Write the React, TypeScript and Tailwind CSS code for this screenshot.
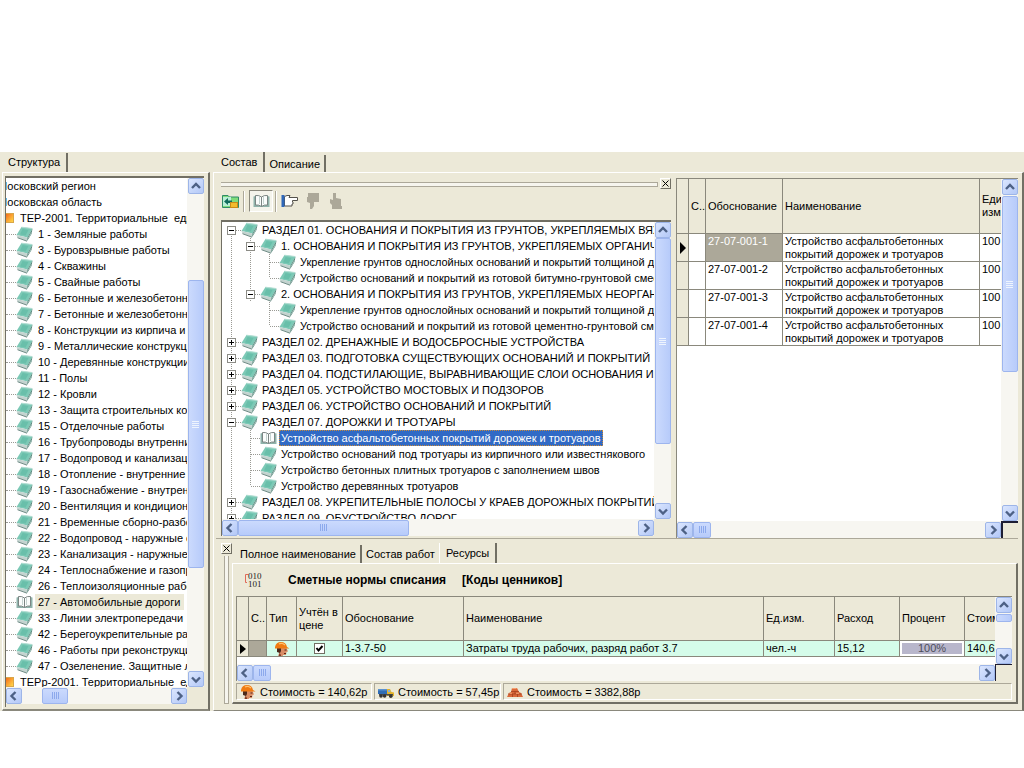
import React from "react";

type Cell = "v" | "t" | "l" | "+" | "-" | "+f" | " ";

function Book() {
  return (
    <svg width="17" height="16" viewBox="0 0 17 16" className="block shrink-0" aria-hidden="true">
      <path d="M5.5 1 L16.5 2.5 L11.5 11.5 L0.5 9 Z" fill="#7cc9b6" />
      <path d="M6.5 3 L12.5 4 L9.5 9.5 L4 8.5 Z" fill="#69bfaa" />
      <path d="M5.5 1.2 L16 2.5" stroke="#b3ded3" fill="none" />
      <path d="M0.5 9 L11.5 11.5 L11 15 L1.5 11.5 Z" fill="#c3d3cf" />
      <path d="M1.5 11.7 L11 15.2" stroke="#6d8983" fill="none" />
      <path d="M11.5 11.5 L16.5 2.5 L15.5 8 L11 15.3 Z" fill="#55857a" />
      <path d="M12.5 12 L15.5 6.5" stroke="#a8c6bf" fill="none" />
    </svg>
  );
}

function OpenBook() {
  return (
    <svg width="17" height="16" viewBox="0 0 17 16" className="block shrink-0" aria-hidden="true">
      <path d="M0.5 3.5 L2.5 3 L2.5 12 L14.5 12 L14.5 3 L16.5 3.5 L16.5 14 L0.5 14 Z" fill="#8fb3ab" />
      <path d="M2.5 2.5 Q6 2 8.5 4 Q11 2 14.5 2.5 L14.5 12 Q11 11.5 8.5 13.5 Q6 11.5 2.5 12 Z" fill="#fbfdfc" stroke="#7b8583" />
      <path d="M8.5 4 V13.5" stroke="#7b8583" />
      <path d="M6.5 4 V11 M10.5 4 V11" stroke="#c5d3d0" />
    </svg>
  );
}

function Helmet() {
  return (
    <svg width="16" height="16" viewBox="0 0 16 16" className="block shrink-0" aria-hidden="true">
      <path d="M4 7 L12.5 7 L14 10.5 L12.5 11 L12 14 L9 14 L8.5 16 L4 16 L5 12 Z" fill="#d98d66" />
      <path d="M3 7 L7 7 L7 10 L6 12 L3 11 Z" fill="#4a2a1c" />
      <path d="M1 6 Q2 1 7 1 Q12 1 13 6 L15.5 7.5 L9 7.5 L1 7.5 Z" fill="#f07b12" />
      <path d="M5 3 Q8 1.5 11 4" stroke="#ffc170" strokeWidth="1.3" fill="none" />
      <path d="M10.5 9 H12.5 M10 12.5 H12" stroke="#5a2516" />
      <path d="M4.5 16 L5.5 12 L7 14 L7 16 Z" fill="#7a3b28" />
    </svg>
  );
}

function Truck() {
  return (
    <svg width="16" height="16" viewBox="0 0 16 16" className="block shrink-0" aria-hidden="true">
      <rect x="0" y="6" width="9" height="4" fill="#2f6cb5" />
      <rect x="0" y="5" width="9" height="1.5" fill="#5c93cf" />
      <path d="M9 10 V5 H12 L13.5 8 L16 8.5 V12 H9 Z" fill="#e3b32b" />
      <path d="M10 8 V6 H11.8 L12.6 8 Z" fill="#7fb0dd" />
      <rect x="1" y="10" width="14" height="1.5" fill="#4b4b4b" />
      <circle cx="3" cy="12" r="1.8" fill="#333" />
      <circle cx="6.6" cy="12" r="1.8" fill="#333" />
      <circle cx="12.8" cy="12.2" r="1.8" fill="#333" />
    </svg>
  );
}

function Bricks() {
  return (
    <svg width="16" height="16" viewBox="0 0 16 16" className="block shrink-0" aria-hidden="true">
      <path d="M5 4 L10 4 L12 8 L14 9 L16 13 L0 13 L2 9 L4 8 Z" fill="#d9683a" />
      <path d="M1 10 H15 M4 7.5 H12 M5.5 10 V13 M10.5 10 V13 M8 7.5 V10" stroke="#a33f1e" strokeWidth="0.8" />
      <path d="M5 4.5 H9.5 M2.5 9.3 H5 M9 9.3 H12" stroke="#f3a070" />
    </svg>
  );
}

function TreeCell({ kind }: { kind: Cell }) {
  const line = { stroke: "#9a9a94", strokeDasharray: "1 1" };
  const box = kind === "+" || kind === "-" || kind === "+f";
  const svg = (
    <svg width="19" height="16" viewBox="0 0 19 16" className="block" aria-hidden="true">
      {(kind === "v" || kind === "t" || kind === "+") && <path d="M9.5 0 V16" {...line} />}
      {kind === "l" && <path d="M9.5 0 V8" {...line} />}
      {(kind === "-" || kind === "+f") && <path d={kind === "-" ? "M9.5 0 V16" : "M9.5 8 V16"} {...line} />}
      {kind !== "v" && kind !== " " && <path d="M10 8.5 H19" {...line} />}
      {box && <rect x="5.5" y="4.5" width="8" height="8" fill="#fff" stroke="#8c8c86" />}
      {box && <path d="M7 8.5 H12" stroke="#000" />}
      {kind === "+" && <path d="M9.5 6 V11" stroke="#000" />}
    </svg>
  );
  return box ? (
    <button type="button" aria-label={kind === "+" ? "Развернуть" : "Свернуть"} className="block shrink-0">
      {svg}
    </button>
  ) : (
    <span className="block shrink-0">{svg}</span>
  );
}

const arrows = {
  up: "M4 10 L8 6 L12 10",
  down: "M4 6.5 L8 10.5 L12 6.5",
  left: "M9.5 4 L5.5 8 L9.5 12",
  right: "M6.5 4 L10.5 8 L6.5 12",
};
const arrowNames = { up: "Вверх", down: "Вниз", left: "Влево", right: "Вправо" };

function Arrow({ dir }: { dir: keyof typeof arrows }) {
  return (
    <button
      type="button"
      aria-label={arrowNames[dir]}
      className="block size-4 shrink-0 rounded-xs border border-[#9db5e8] bg-linear-to-br from-[#dbe6fe] to-[#b3c8f7]"
    >
      <svg viewBox="1 1 14 14" className="block size-3.5">
        <path d={arrows[dir]} fill="none" stroke="#4d6185" strokeWidth="2.4" />
      </svg>
    </button>
  );
}

function VScroll({ thumb, grip = true }: { thumb: string; grip?: boolean }) {
  return (
    <div className="flex w-[17px] shrink-0 flex-col items-center bg-[#f7f6f1]">
      <Arrow dir="up" />
      <div className="flex min-h-0 w-4 flex-1 flex-col">
        <div className={`flex flex-col items-center justify-center gap-px rounded-xs border border-[#9db5ee] bg-linear-to-r from-[#cbdafd] to-[#b7cbfa] ${thumb}`}>
          {grip && [0, 1, 2, 3].map((i) => <span key={i} className="h-px w-[7px] bg-[#eef4fe]" />)}
        </div>
      </div>
      <Arrow dir="down" />
    </div>
  );
}

function HScroll({ thumb }: { thumb: string }) {
  return (
    <div className="flex h-[17px] min-w-0 flex-1 items-center bg-[#f7f6f1]">
      <Arrow dir="left" />
      <div className="flex h-4 min-w-0 flex-1">
        <div className={`flex items-center justify-center gap-px rounded-xs border border-[#9db5ee] bg-linear-to-b from-[#cbdafd] to-[#b7cbfa] ${thumb}`}>
          {[0, 1, 2, 3].map((i) => (
            <span key={i} className="h-[7px] w-px bg-[#8ca9ec]" />
          ))}
        </div>
      </div>
      <Arrow dir="right" />
    </div>
  );
}

const chapters = [
  "1 - Земляные работы",
  "3 - Буровзрывные работы",
  "4 - Скважины",
  "5 - Свайные работы",
  "6 - Бетонные и железобетонные",
  "7 - Бетонные и железобетонные",
  "8 - Конструкции из кирпича и блоков",
  "9 - Металлические конструкции",
  "10 - Деревянные конструкции",
  "11 - Полы",
  "12 - Кровли",
  "13 - Защита строительных конструкций",
  "15 - Отделочные работы",
  "16 - Трубопроводы внутренние",
  "17 - Водопровод и канализация",
  "18 - Отопление - внутренние устройства",
  "19 - Газоснабжение - внутренние",
  "20 - Вентиляция и кондиционирование",
  "21 - Временные сборно-разборные",
  "22 - Водопровод - наружные сети",
  "23 - Канализация - наружные сети",
  "24 - Теплоснабжение и газопроводы",
  "26 - Теплоизоляционные работы",
  "27 - Автомобильные дороги",
  "33 - Линии электропередачи",
  "42 - Берегоукрепительные работы",
  "46 - Работы при реконструкции",
  "47 - Озеленение. Защитные лесные",
];

const sections: { cells: Cell[]; text: string; selected?: boolean }[] = [
  { cells: ["+f"], text: "РАЗДЕЛ 01. ОСНОВАНИЯ И ПОКРЫТИЯ ИЗ ГРУНТОВ, УКРЕПЛЯЕМЫХ ВЯЖУЩИМИ" },
  { cells: ["v", "-"], text: "1. ОСНОВАНИЯ И ПОКРЫТИЯ ИЗ ГРУНТОВ, УКРЕПЛЯЕМЫХ ОРГАНИЧЕСКИМИ" },
  { cells: ["v", "v", "t"], text: "Укрепление грунтов однослойных оснований и покрытий толщиной до" },
  { cells: ["v", "v", "l"], text: "Устройство оснований и покрытий из готовой битумно-грунтовой смеси" },
  { cells: ["v", "-"], text: "2. ОСНОВАНИЯ И ПОКРЫТИЯ ИЗ ГРУНТОВ, УКРЕПЛЯЕМЫХ НЕОРГАНИЧЕСКИМИ" },
  { cells: ["v", " ", "t"], text: "Укрепление грунтов однослойных оснований и покрытий толщиной до" },
  { cells: ["v", " ", "l"], text: "Устройство оснований и покрытий из готовой цементно-грунтовой смеси" },
  { cells: ["+"], text: "РАЗДЕЛ 02. ДРЕНАЖНЫЕ И ВОДОСБРОСНЫЕ УСТРОЙСТВА" },
  { cells: ["+"], text: "РАЗДЕЛ 03. ПОДГОТОВКА СУЩЕСТВУЮЩИХ ОСНОВАНИЙ И ПОКРЫТИЙ" },
  { cells: ["+"], text: "РАЗДЕЛ 04. ПОДСТИЛАЮЩИЕ, ВЫРАВНИВАЮЩИЕ СЛОИ ОСНОВАНИЯ И" },
  { cells: ["+"], text: "РАЗДЕЛ 05. УСТРОЙСТВО МОСТОВЫХ И ПОДЗОРОВ" },
  { cells: ["+"], text: "РАЗДЕЛ 06. УСТРОЙСТВО ОСНОВАНИЙ И ПОКРЫТИЙ" },
  { cells: ["-"], text: "РАЗДЕЛ 07. ДОРОЖКИ И ТРОТУАРЫ" },
  { cells: ["v", "t"], text: "Устройство асфальтобетонных покрытий дорожек и тротуаров", selected: true },
  { cells: ["v", "t"], text: "Устройство оснований под тротуары из кирпичного или известнякового" },
  { cells: ["v", "t"], text: "Устройство бетонных плитных тротуаров с заполнением швов" },
  { cells: ["v", "l"], text: "Устройство деревянных тротуаров" },
  { cells: ["+"], text: "РАЗДЕЛ 08. УКРЕПИТЕЛЬНЫЕ ПОЛОСЫ У КРАЕВ ДОРОЖНЫХ ПОКРЫТИЙ" },
  { cells: ["+"], text: "РАЗДЕЛ 09. ОБУСТРОЙСТВО ДОРОГ" },
];

const works = ["27-07-001-1", "27-07-001-2", "27-07-001-3", "27-07-001-4"];

function CloseButton() {
  return (
    <button
      type="button"
      aria-label="Закрыть"
      className="flex size-[11px] shrink-0 items-center justify-center border border-t-white border-r-[#716f64] border-b-[#716f64] border-l-white"
    >
      <svg width="7" height="7" viewBox="0 0 7 7" className="block shrink-0">
        <path d="M0.5 0.5 L6.5 6.5 M6.5 0.5 L0.5 6.5" stroke="#000" />
      </svg>
    </button>
  );
}

function StructurePanel() {
  return (
    <section className="flex w-[211px] shrink-0 flex-col pl-0.5">
      <div role="tablist" className="flex h-5">
        <button type="button" role="tab" aria-selected="true" className="mt-px flex border-r-2 border-[#716f64] px-1.5 leading-[18px]">
          Структура
        </button>
      </div>
      <div className="mr-px flex flex-1 flex-col border-t border-r-2 border-b-2 border-l border-t-white border-r-[#716f64] border-b-[#8a887c] border-l-white pt-[3px] pr-1 pb-0.5 pl-0.5">
        <div className="flex flex-1 flex-col border-t-2 border-l border-[#716f64] bg-[#ece9d8]">
          <div className="flex h-[509px]">
            <div role="tree" className="min-w-0 flex-1 overflow-hidden bg-white whitespace-nowrap">
              <div className="-ml-2 h-4 leading-4">Московский регион</div>
              <div className="-ml-2 h-4 leading-4">Московская область</div>
              <FolderRow text="ТЕР-2001. Территориальные  единичные" />
              {chapters.map((c) => {
                const current = c.startsWith("27");
                return (
                  <div key={c} role="treeitem" className="flex h-4 items-center">
                    <span className="w-[10px] shrink-0 border-t border-dotted border-[#9a9a94]" />
                    {current ? <OpenBook /> : <Book />}
                    <span className={`ml-0.5 pr-1 pl-[3px] leading-4 ${current ? "bg-[#ece9d8]" : ""}`}>{c}</span>
                  </div>
                );
              })}
              <FolderRow text="ТЕРр-2001. Территориальные  единичные" />
            </div>
            <VScroll thumb="mt-[86px] h-[288px]" />
          </div>
          <div className="flex">
            <HScroll thumb="ml-5 w-[26px]" />
            <div className="w-[17px]" />
          </div>
        </div>
      </div>
    </section>
  );
}

function FolderRow({ text }: { text: string }) {
  return (
    <div role="treeitem" className="flex h-4 items-center">
      <span className="mr-1.5 h-2.5 w-2 shrink-0 border border-l-0 border-[#d9a64a] bg-linear-to-br from-[#f06a1a] to-[#ffd84a]" />
      <span className="leading-4 whitespace-pre">{text}</span>
    </div>
  );
}

function Toolbar() {
  return (
    <div className="flex h-[22px] items-center pl-px">
      <button type="button" aria-label="Перейти">
        <svg width="17" height="16" viewBox="0 0 17 16" className="block">
          <path d="M0.5 2.5 H6 L7.5 4 H16.5 V14.5 H0.5 Z" fill="#7fdc7a" stroke="#2f8a68" />
          <rect x="1" y="4" width="8" height="9" fill="#b9efd6" />
          <path d="M2 8.5 L6 5 V7.5 H10 V10 H6 V12 Z" fill="#0f6b5c" />
          <rect x="8.5" y="9.5" width="7" height="5" fill="#f3bb2c" stroke="#c98a17" />
        </svg>
      </button>
      <span className="mx-1 h-[21px] w-0.5 border-r border-l border-r-white border-l-[#aca899]" />
      <button type="button" aria-label="Книга" aria-pressed="true" className="flex h-[22px] w-6 items-center justify-center border border-t-[#8a887c] border-r-white border-b-white border-l-[#8a887c] bg-[#f5f4ec]">
        <OpenBook />
      </button>
      <span className="ml-0.5 h-[21px] w-0.5 border-r border-l border-r-white border-l-[#aca899]" />
      <button type="button" aria-label="Вправо" className="ml-1">
        <svg width="18" height="16" viewBox="0 0 18 16" className="block">
          <path d="M3.5 3.5 L6 2.5 L9 2.5 L8 4.5 H16.5 V7.5 H11.5 V9 H12 V11 H11 V13 H3.5 Z" fill="#fff" stroke="#54524c" />
          <rect x="0.5" y="2" width="3" height="12" fill="#2e67b8" />
        </svg>
      </button>
      <button type="button" aria-label="Вниз" className="ml-1.5">
        <svg width="16" height="16" viewBox="0 0 16 16" className="block">
          <path d="M3 0 H14 V9 H9 V13 L7 16 H5 V10 L2 9 V4 H3 Z" fill="#aca899" />
        </svg>
      </button>
      <button type="button" aria-label="Вверх" className="ml-2">
        <svg width="14" height="16" viewBox="0 0 14 16" className="block">
          <path d="M4 0 H7 V5 L12 6 V13 H13 V16 H3 V12 L1 10 V6 L4 7 Z" fill="#aca899" />
        </svg>
      </button>
    </div>
  );
}

function CompositionPane() {
  return (
    <div className="flex w-[455px] shrink-0 flex-col pl-[5px]">
      <div className="flex h-3 items-start gap-0.5">
        <div className="mt-1 h-[5px] flex-1 border-t border-r border-b border-[#aca899] bg-[#f6f5ee]" />
        <CloseButton />
      </div>
      <Toolbar />
      <div className="mt-2 border-t-2 border-l border-[#716f64]">
        <div className="flex h-[297px]">
          <div role="tree" className="min-w-0 flex-1 overflow-hidden bg-white whitespace-nowrap">
            {sections.map((s) => (
              <div key={s.cells.join("") + s.text} role="treeitem" className="flex h-4 items-center">
                {s.cells.map((c, i) => (
                  <TreeCell key={i} kind={c} />
                ))}
                {s.selected ? <OpenBook /> : <Book />}
                <span className={`ml-0.5 px-0.5 leading-4 ${s.selected ? "bg-[#316ac5] text-white outline-1 -outline-offset-1 outline-dotted outline-[#c98a3a]" : ""}`}>
                  {s.text}
                </span>
              </div>
            ))}
          </div>
          <VScroll thumb="h-[206px]" />
        </div>
        <div className="flex">
          <HScroll thumb="w-[171px]" />
          <div className="w-[17px]" />
        </div>
      </div>
    </div>
  );
}

const th = "border-r border-b border-[#8a887c] bg-[#ece9d8] px-0.5 text-left font-normal overflow-hidden";
const td = "border-r border-b border-[#8a887c] px-0.5 align-top overflow-hidden";
const marker = "border-r border-b border-[#8a887c] bg-[#ece9d8] px-[3px] align-middle";

function WorksPane() {
  return (
    <div className="ml-[5px] flex min-w-0 flex-1 flex-col border-t border-l border-[#8a887c]">
      <div className="flex h-[342px]">
        <div className="min-w-0 flex-1 overflow-hidden bg-white">
          <table className="w-full table-fixed border-separate border-spacing-0 leading-[13px]">
            <colgroup>
              <col className="w-3" />
              <col className="w-[17px]" />
              <col className="w-[77px]" />
              <col />
              <col className="w-[21px]" />
            </colgroup>
            <thead>
              <tr className="h-[55px]">
                <th className={th} />
                <th className={`${th} whitespace-nowrap`}>С..</th>
                <th className={th}>Обоснование</th>
                <th className={th}>Наименование</th>
                <th className={`${th} border-r-0 whitespace-nowrap`}>
                  Еди
                  <br />
                  изм
                </th>
              </tr>
            </thead>
            <tbody>
              {works.map((w, i) => (
                <tr key={w} className="h-7">
                  <td className={marker}>
                    {i === 0 && (
                      <svg width="6" height="12" viewBox="0 0 6 12" className="block">
                        <path d="M0 0 L6 6 L0 12 Z" fill="#000" />
                      </svg>
                    )}
                  </td>
                  <td className={td} />
                  <td className={`${td} pt-px ${i === 0 ? "bg-[#aca899] text-white" : ""}`}>{w}</td>
                  <td className={`${td} pt-px`}>Устройство асфальтобетонных покрытий дорожек и тротуаров</td>
                  <td className={`${td} border-r-0 pt-px`}>100</td>
                </tr>
              ))}
            </tbody>
          </table>
        </div>
        <VScroll thumb="mt-px h-[176px]" />
      </div>
      <div className="flex">
        <HScroll thumb="w-[18px]" />
        <div className="w-[17px] border-t-2 border-l-2 border-[#1d1d33]" />
      </div>
    </div>
  );
}

const inactiveTab = "mt-0.5 border-r-2 border-[#716f64] px-1 leading-[18px]";

function ResourcesPane() {
  return (
    <div className="flex pt-1 pb-1.5 pl-[5px]">
      <div className="flex w-[11px] shrink-0 flex-col items-center">
        <CloseButton />
        <div className="mt-0.5 w-[5px] flex-1 border-r border-b border-l border-[#aca899] bg-[#f6f5ee]" />
      </div>
      <div className="flex min-w-0 flex-1 flex-col">
        <div role="tablist" className="ml-1 flex h-5 items-stretch">
          <button type="button" role="tab" aria-selected="false" className={inactiveTab}>
            Полное наименование
          </button>
          <button type="button" role="tab" aria-selected="false" className="mt-0.5 px-1 leading-[18px]">
            Состав работ
          </button>
          <button type="button" role="tab" aria-selected="true" className="border-r-2 border-l border-r-[#716f64] border-l-white px-1.5 leading-[18px]">
            Ресурсы
          </button>
        </div>
        <div className="mr-1 flex flex-col border-t border-r-2 border-b-2 border-l border-t-white border-r-[#716f64] border-b-[#716f64] border-l-white pr-1 pb-0.5 pl-[3px]">
          <div className="flex h-8 items-center pl-2">
            <svg width="18" height="18" viewBox="0 0 18 18" className="block" aria-hidden="true">
              <path d="M4.5 3.5 H1.5 V11.5 H3" stroke="#e06a5a" fill="none" />
              <text x="4" y="8" fontSize="9" fill="#222" fontFamily="Liberation Serif, serif">010</text>
              <text x="4" y="16" fontSize="9" fill="#222" fontFamily="Liberation Serif, serif">101</text>
            </svg>
            <h2 className="ml-[26px] flex gap-4 text-xs font-bold">
              <span>Сметные нормы списания</span>
              <span>[Коды ценников]</span>
            </h2>
          </div>
          <div className="border-t border-l border-[#8a887c]">
            <div className="flex h-[67px]">
              <div className="min-w-0 flex-1 overflow-hidden bg-white">
                <table className="w-full table-fixed border-separate border-spacing-0 leading-[13px]">
                  <colgroup>
                    <col className="w-3" />
                    <col className="w-[18px]" />
                    <col className="w-[30px]" />
                    <col className="w-[46px]" />
                    <col className="w-[121px]" />
                    <col />
                    <col className="w-[71px]" />
                    <col className="w-[65px]" />
                    <col className="w-[65px]" />
                    <col className="w-[30px]" />
                  </colgroup>
                  <thead>
                    <tr className="h-11">
                      <th className={th} />
                      <th className={`${th} whitespace-nowrap`}>С..</th>
                      <th className={th}>Тип</th>
                      <th className={th}>Учтён в цене</th>
                      <th className={th}>Обоснование</th>
                      <th className={th}>Наименование</th>
                      <th className={th}>Ед.изм.</th>
                      <th className={th}>Расход</th>
                      <th className={th}>Процент</th>
                      <th className={`${th} border-r-0`}>Стоимость</th>
                    </tr>
                  </thead>
                  <tbody className="bg-[#d5fcea]">
                    <tr className="h-4">
                      <td className={marker}>
                        <svg width="6" height="10" viewBox="0 0 6 10" className="block">
                          <path d="M0 0 L6 5 L0 10 Z" fill="#000" />
                        </svg>
                      </td>
                      <td className={`${td} bg-[#aca899]`} />
                      <td className={td}>
                        <div className="flex h-[15px] justify-center overflow-hidden">
                          <Helmet />
                        </div>
                      </td>
                      <td className={td}>
                        <label className="relative mx-auto mt-0.5 block size-[11px]">
                          <input
                            type="checkbox"
                            defaultChecked
                            aria-label="Учтён в цене"
                            className="peer block size-[11px] appearance-none border border-[#716f64] bg-white"
                          />
                          <svg viewBox="0 0 11 11" className="pointer-events-none absolute inset-0 hidden size-[11px] peer-checked:block">
                            <path d="M2.5 5 L4.5 7.5 L8.5 3" fill="none" stroke="#000" strokeWidth="2" />
                          </svg>
                        </label>
                      </td>
                      <td className={`${td} pt-px`}>1-3.7-50</td>
                      <td className={`${td} pt-px`}>Затраты труда рабочих, разряд работ 3.7</td>
                      <td className={`${td} pt-px`}>чел.-ч</td>
                      <td className={`${td} pt-px`}>15,12</td>
                      <td className={`${td} bg-white`}>
                        <div className="mt-0.5 h-[11px] bg-[#b8b6cb] text-center leading-[11px] text-[#4d4c5a]">100%</div>
                      </td>
                      <td className={`${td} border-r-0 pt-px`}>140,62</td>
                    </tr>
                  </tbody>
                </table>
              </div>
              <VScroll thumb="mt-px h-2" grip={false} />
            </div>
            <div className="flex">
              <HScroll thumb="w-[18px]" />
              <div className="w-[17px] border-t border-l border-[#1d1d33]" />
            </div>
          </div>
          <footer className="mt-0.5 flex gap-0.5 leading-4">
            <span className={`${statusCell} w-[136px]`}>
              <Helmet />
              Стоимость = 140,62р
            </span>
            <span className={`${statusCell} w-[127px]`}>
              <Truck />
              Стоимость = 57,45р
            </span>
            <span className={`${statusCell} flex-1`}>
              <Bricks />
              Стоимость = 3382,88р
            </span>
          </footer>
        </div>
      </div>
    </div>
  );
}

const statusCell =
  "flex h-[17px] items-center gap-1 overflow-hidden whitespace-nowrap border border-t-[#aca899] border-r-white border-b-white border-l-[#aca899] pl-[3px]";

export default function App() {
  return (
    <div className="min-h-screen bg-white pt-[152px] font-['Liberation_Sans',sans-serif] text-[11px] text-black">
      <main className="flex bg-[#ece9d8]">
        <StructurePanel />
        <section className="ml-0.5 flex min-w-0 flex-1 flex-col">
          <div role="tablist" className="ml-1 flex h-5">
            <button type="button" role="tab" aria-selected="true" className="border-r-2 border-[#716f64] pr-1.5 pl-1 leading-[18px]">
              Состав
            </button>
            <button type="button" role="tab" aria-selected="false" className="mt-[3px] border-r-2 border-[#716f64] px-1 leading-4">
              Описание
            </button>
          </div>
          <div className="flex flex-1 flex-col border-t border-r-2 border-b border-l border-t-white border-r-[#716f64] border-b-[#8a887c] border-l-white pl-0.5">
            <div className="mr-1 flex border-b border-[#aca899] pt-[5px]">
              <CompositionPane />
              <WorksPane />
            </div>
            <ResourcesPane />
          </div>
        </section>
      </main>
    </div>
  );
}
